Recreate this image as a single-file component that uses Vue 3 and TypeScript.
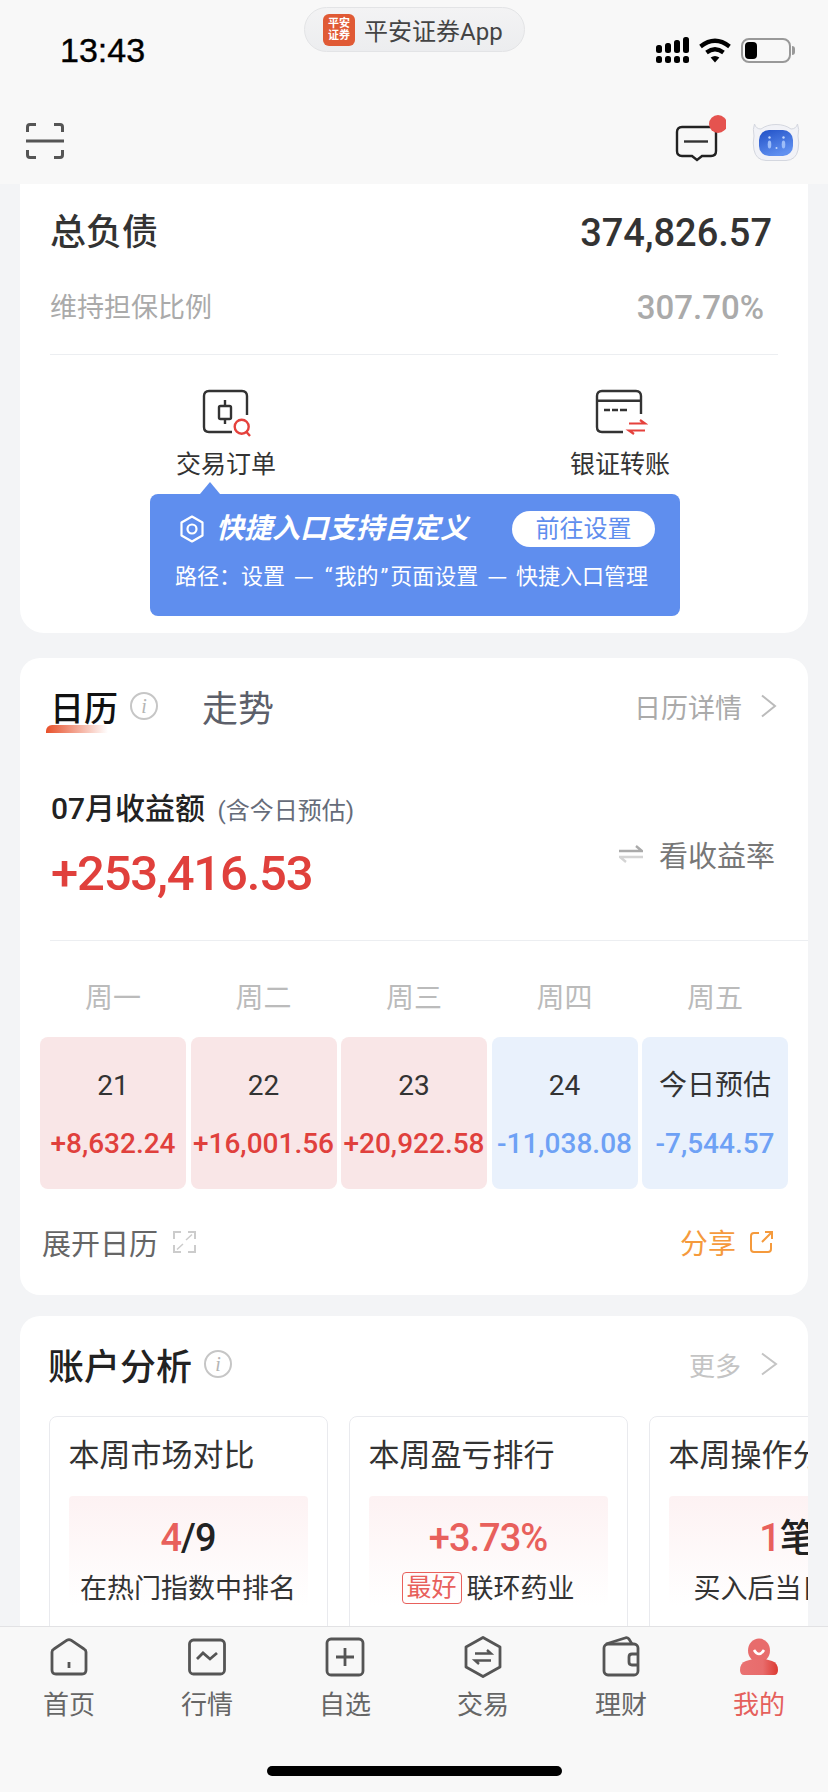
<script setup lang="ts">
interface DayCell {
  week: string
  label: string
  amount: string
  up: boolean
}

interface AnalysisCard {
  title: string
  desc: string
}

const days: DayCell[] = [
  { week: '周一', label: '21', amount: '+8,632.24', up: true },
  { week: '周二', label: '22', amount: '+16,001.56', up: true },
  { week: '周三', label: '23', amount: '+20,922.58', up: true },
  { week: '周四', label: '24', amount: '-11,038.08', up: false },
  { week: '周五', label: '今日预估', amount: '-7,544.57', up: false },
]

const analysis: AnalysisCard[] = [
  { title: '本周市场对比', desc: '在热门指数中排名' },
  { title: '本周盈亏排行', desc: '联环药业' },
  { title: '本周操作分析', desc: '买入后当日卖出' },
]
</script>

<template>
  <div class="screen">
    <header class="top">
      <div class="status">
        <span class="time">13:43</span>
        <div class="pill">
          <span class="pill-logo">平安<br />证券</span>
          <span class="pill-name">平安证券App</span>
        </div>
        <div class="status-icons">
          <svg width="33" height="26" viewBox="0 0 33 26">
            <rect x="0" y="8" width="6" height="8" rx="2.5" />
            <rect x="9" y="6" width="6" height="10" rx="2.5" />
            <rect x="18" y="3" width="6" height="13" rx="2.5" />
            <rect x="27" y="0" width="6" height="16" rx="2.5" />
            <rect x="0" y="19" width="6" height="7" rx="2.5" />
            <rect x="9" y="19" width="6" height="7" rx="2.5" />
            <rect x="18" y="19" width="6" height="7" rx="2.5" />
            <rect x="27" y="19" width="6" height="7" rx="2.5" />
          </svg>
          <svg width="32" height="25" viewBox="0 0 32 25">
            <path d="M1.5 8.5Q16 -3 30.5 8.5" fill="none" stroke="#000" stroke-width="4.2" />
            <path d="M7.5 14.5Q16 8 24.5 14.5" fill="none" stroke="#000" stroke-width="4.2" />
            <path d="M16 24.5L11.6 19.6Q16 16.6 20.4 19.6Z" />
          </svg>
          <div class="battery">
            <span class="battery-level"></span>
          </div>
        </div>
      </div>
      <div class="nav">
        <svg class="scan" width="38" height="36" viewBox="0 0 38 36" fill="none" stroke="#555" stroke-width="3">
          <path d="M1.500 9V4Q1.500 1.500 4 1.500H10M28 1.500H34Q36.500 1.500 36.500 4V9" />
          <path d="M1.500 27V32Q1.500 34.500 4 34.500H10M28 34.500H34Q36.500 34.500 36.500 32V27" />
          <path d="M0 18H38" />
        </svg>
        <div class="nav-right">
          <svg width="56" height="56" viewBox="0 0 56 56" fill="none">
            <path d="M12 13H41Q46 13 46 18V37Q46 42 41 42H32L27 46L22 42H12Q7 42 7 37V18Q7 13 12 13Z" stroke="#222" stroke-width="2.4" />
            <path d="M14 27.500H38" stroke="#333" stroke-width="2.4" />
            <circle cx="48" cy="10" r="9" fill="#e5534f" />
          </svg>
          <svg width="48" height="38" viewBox="0 0 48 38">
            <defs>
              <linearGradient id="faceFill" x1="0" y1="0" x2="0.500" y2="1">
                <stop offset="0" stop-color="#2050c6" />
                <stop offset="1" stop-color="#6090f0" />
              </linearGradient>
            </defs>
            <path d="M2.500 1Q4 6 9 6Q15 1.500 24 1.500Q33 1.500 39 6Q44 6 45.500 1Q47.500 6 46 13Q47.500 20 46 27Q44 37 34 37.500H14Q4 37 2 27Q0.500 20 2 13Q0.500 6 2.500 1Z" fill="#f1f2f7" stroke="#d4d7df" />
            <rect x="7" y="7" width="34" height="26" rx="10" fill="url(#faceFill)" />
            <ellipse cx="17.500" cy="21.500" rx="1.800" ry="4" fill="#9dbdf8" />
            <ellipse cx="31.500" cy="21.500" rx="1.800" ry="4" fill="#9dbdf8" />
            <circle cx="17.500" cy="14.500" r="1.200" fill="#c3d7fb" />
            <circle cx="31.500" cy="14.500" r="1.200" fill="#c3d7fb" />
            <circle cx="24.500" cy="25" r="1" fill="#c3d7fb" />
          </svg>
        </div>
      </div>
    </header>

    <main class="content">
      <section class="card summary">
        <div class="debt-row">
          <span class="debt-label">总负债</span>
          <span class="debt-value">374,826.57</span>
        </div>
        <div class="ratio-row">
          <span>维持担保比例</span>
          <span class="ratio-value">307.70%</span>
        </div>
        <div class="line"></div>
        <div class="quick">
          <div class="quick-item">
            <svg width="56" height="52" viewBox="-2 0 56 52" fill="none" stroke="#333" stroke-width="2.4">
              <path d="M47 27V8Q47 3 42 3H9Q4 3 4 8V39Q4 44 9 44H32" />
              <rect x="19" y="18" width="12" height="13" rx="1.500" />
              <path d="M25 12V18M25 31V36" />
              <circle cx="41.700" cy="38.700" r="7" stroke="#e5413c" />
              <path d="M46.500 44L50 48" stroke="#e5413c" />
            </svg>
            <span>交易订单</span>
          </div>
          <div class="quick-item">
            <svg width="56" height="52" viewBox="0 0 56 52" fill="none" stroke="#333" stroke-width="2.4">
              <path d="M49 26V8Q49 3 44 3H10Q5 3 5 8V39Q5 44 10 44H31" />
              <path d="M5 12.700H49" />
              <path d="M12 22H18M20 22H26M28 22H35" />
              <path d="M37 35.500H53L48 32M53 42.500H37L42 46" stroke="#e5413c" stroke-width="2.200" />
            </svg>
            <span>银证转账</span>
          </div>
        </div>
        <div class="tip">
          <div class="tip-head">
            <svg class="tip-hex" width="24" height="28" viewBox="0 0 24 28" fill="none" stroke="#fff" stroke-width="2.2">
              <path d="M12 1.500L22.500 7.500V20.500L12 26.500L1.500 20.500V7.500Z" stroke-linejoin="round" />
              <circle cx="12" cy="14" r="4.500" />
            </svg>
            <span class="tip-title">快捷入口支持自定义</span>
            <span class="tip-btn">前往设置</span>
          </div>
          <div class="tip-path">路径：设置<span class="dash">—</span><span class="quote">“</span>我的<span class="quote">”</span>页面设置<span class="dash">—</span>快捷入口管理</div>
        </div>
      </section>

      <section class="card calendar">
        <div class="tabs">
          <span class="tab-on">日历</span>
          <span class="info">i</span>
          <span class="tab-off">走势</span>
          <span class="more">日历详情</span>
          <svg width="17" height="24" viewBox="0 0 17 24" fill="none" stroke="#bbb" stroke-width="2">
            <path d="M2 1.500L15 12L2 22.500" />
          </svg>
        </div>
        <div class="month">
          <div>
            <div class="month-label">07月收益额 <small>(含今日预估)</small></div>
            <div class="month-value">+253,416.53</div>
          </div>
          <div class="rate">
            <svg width="24" height="18" viewBox="0 0 24 18" fill="none" stroke-width="2.400">
              <path d="M0 6H23L17 1" stroke="#aaa" />
              <path d="M24 12H1L7 17" stroke="#d4d4d4" />
            </svg>
            <span>看收益率</span>
          </div>
        </div>
        <div class="line line-open"></div>
        <div class="week">
          <span v-for="d in days" :key="d.week">{{ d.week }}</span>
        </div>
        <div class="days">
          <div v-for="d in days" :key="d.label" class="day" :class="d.up ? 'day-up' : 'day-down'">
            <div class="day-label">{{ d.label }}</div>
            <div class="day-amount">{{ d.amount }}</div>
          </div>
        </div>
        <div class="cal-foot">
          <span class="expand">展开日历</span>
          <svg width="23" height="22" viewBox="0 0 23 22" fill="none" stroke="#ccc" stroke-width="2">
            <path d="M8 1H1V8M15 1H22V8M1 14V21H8M22 14V21H15" />
            <path d="M13 9L19 3.500M10 13L4 18.500" stroke-width="1.500" />
          </svg>
          <span class="share">分享</span>
          <svg width="23" height="22" viewBox="0 0 23 22" fill="none" stroke="#f59a3c" stroke-width="2">
            <path d="M9 2H4Q1 2 1 5V18Q1 21 4 21H18Q21 21 21 18V12" />
            <path d="M12 11L21 2M15 1H22V8" />
          </svg>
        </div>
      </section>

      <section class="card account">
        <div class="acc-head">
          <span class="acc-title">账户分析</span>
          <span class="info">i</span>
          <span class="acc-more">更多</span>
          <svg width="18" height="24" viewBox="0 0 18 24" fill="none" stroke="#c4c4c4" stroke-width="2">
            <path d="M2 1.500L16 12L2 22.500" />
          </svg>
        </div>
        <div class="acc-row">
          <div v-for="(a, i) in analysis" :key="a.title" class="acc-card">
            <div class="acc-card-title">{{ a.title }}</div>
            <div class="acc-box">
              <div v-if="i === 0" class="acc-value"><b>4</b>/9</div>
              <div v-else-if="i === 1" class="acc-value"><b>+3.73%</b></div>
              <div v-else class="acc-value"><b>1</b>笔</div>
              <div class="acc-desc">
                <em v-if="i === 1" class="best">最好</em>{{ a.desc }}
              </div>
            </div>
          </div>
        </div>
      </section>
    </main>

    <footer class="tabbar">
      <div class="tab-items">
        <div class="tab-item">
          <svg width="44" height="44" viewBox="0 0 44 44" fill="none" stroke="#555" stroke-width="2.800">
            <path d="M5 17Q5 15 7 14L20 5.200Q22 4 24 5.200L37 14Q39 15 39 17V35Q39 39 35 39H9Q5 39 5 35Z" />
            <path d="M22 27V33" />
          </svg>
          <span>首页</span>
        </div>
        <div class="tab-item">
          <svg width="44" height="44" viewBox="0 0 44 44" fill="none" stroke="#555" stroke-width="2.800">
            <rect x="4.500" y="5" width="35" height="34" rx="4" />
            <path d="M12 24L18 18L25 24L32 18" />
          </svg>
          <span>行情</span>
        </div>
        <div class="tab-item">
          <svg width="44" height="44" viewBox="0 0 44 44" fill="none" stroke="#555" stroke-width="2.800">
            <rect x="4" y="4" width="36" height="36" rx="4" />
            <path d="M22 13V31M13 22H31" />
          </svg>
          <span>自选</span>
        </div>
        <div class="tab-item">
          <svg width="44" height="44" viewBox="0 0 44 44" fill="none" stroke="#555" stroke-width="2.800">
            <path d="M22 2.500L39 12V32L22 41.500L5 32V12Z" stroke-linejoin="round" />
            <path d="M14 18.500H30L26 15M30 25.500H14L18 29" stroke-width="2.400" />
          </svg>
          <span>交易</span>
        </div>
        <div class="tab-item">
          <svg width="44" height="44" viewBox="0 0 44 44" fill="none" stroke="#555" stroke-width="2.800">
            <rect x="5" y="9" width="34" height="31" rx="4" />
            <path d="M7 9L26 3Q28 2 30 4L33 9" />
            <path d="M39 19H33Q30 19 30 22V27Q30 30 33 30H39" />
          </svg>
          <span>理财</span>
        </div>
        <div class="tab-item tab-item-on">
          <svg width="44" height="44" viewBox="0 0 44 44">
            <defs>
              <linearGradient id="meFill" x1="0" y1="0" x2="1" y2="0">
                <stop offset="0" stop-color="#e97272" />
                <stop offset="0.600" stop-color="#e86c6c" />
                <stop offset="1" stop-color="#dc3a32" />
              </linearGradient>
            </defs>
            <ellipse cx="22" cy="15.500" rx="11" ry="12" fill="#e86c6c" />
            <path d="M3 35Q3 28 9 26L16 24H28L35 26Q41 28 41 35Q41 40 37 40H7Q3 40 3 35Z" fill="url(#meFill)" />
            <path d="M17 15Q22 23 27 15" fill="none" stroke="#fff" stroke-width="2.600" />
          </svg>
          <span>我的</span>
        </div>
      </div>
      <div class="home-bar"></div>
    </footer>
  </div>
</template>

<style>
html,
body {
  margin: 0;
  background: #f3f4f6;
}
</style>

<style scoped>
.screen {
  width: 828px;
  height: 1792px;
  display: flex;
  flex-direction: column;
  overflow: hidden;
  background: #f3f4f6;
  font-family: Roboto, "Noto Sans CJK SC", sans-serif;
  color: #333;
}

.top {
  height: 184px;
  flex: none;
  background: #f8f8f8;
}
.status {
  height: 100px;
  display: grid;
  grid-template-columns: 304px 221px 1fr;
}
.time {
  padding-left: 60px;
  line-height: 100px;
  font-family: "Liberation Sans", sans-serif;
  font-size: 34px;
  color: #000;
  -webkit-text-stroke: 0.4px #000;
}
.pill {
  box-sizing: border-box;
  height: 45px;
  margin-top: 7px;
  padding-left: 18px;
  display: flex;
  align-items: center;
  gap: 9px;
  border: 1px solid #e3e4e6;
  border-radius: 23px;
  background: linear-gradient(#f3f3f4, #ecedef);
}
.pill-logo {
  width: 32px;
  height: 32px;
  flex: none;
  border-radius: 6px;
  background: #e05a35;
  color: #fff;
  font-size: 11px;
  font-weight: 700;
  line-height: 12px;
  text-align: center;
  display: flex;
  align-items: center;
  justify-content: center;
}
.pill-name {
  font-size: 24px;
  color: #444;
  white-space: nowrap;
}
.status-icons {
  padding-right: 37px;
  display: flex;
  justify-content: flex-end;
  align-items: center;
  gap: 10px;
}
.battery {
  position: relative;
  box-sizing: border-box;
  width: 50px;
  height: 25px;
  padding: 2px;
  border: 2px solid #999;
  border-radius: 8px;
}
.battery::after {
  content: "";
  position: absolute;
  right: -6px;
  top: 6px;
  width: 3px;
  height: 9px;
  border-radius: 0 3px 3px 0;
  background: #999;
}
.battery-level {
  display: block;
  width: 12px;
  height: 17px;
  border-radius: 4px;
  background: #000;
}
.nav {
  height: 84px;
  padding: 0 28px 0 26px;
  display: flex;
  align-items: center;
  justify-content: space-between;
}
.scan {
  margin-top: -2px;
}
.nav-right {
  display: flex;
  align-items: center;
  gap: 26px;
}

.content {
  flex: 1;
  min-height: 0;
  padding: 0 20px;
  overflow: hidden;
}
.card {
  position: relative;
  background: #fff;
  border-radius: 20px;
}
.line {
  height: 1px;
  background: #eceef1;
}

.summary {
  padding: 27px 30px 153px;
  border-radius: 0 0 24px 24px;
}
.debt-row,
.ratio-row {
  display: flex;
  justify-content: space-between;
}
.debt-row {
  line-height: 44px;
}
.debt-label {
  font-size: 36px;
  font-weight: 500;
}
.debt-value {
  margin-right: 6px;
  font-size: 38px;
  font-weight: 500;
}
.ratio-row {
  margin-top: 35px;
  padding-right: 14px;
  line-height: 36px;
  font-size: 27px;
  color: #aaa;
}
.ratio-value {
  font-size: 33px;
  font-weight: 500;
}
.summary .line {
  margin-top: 28px;
}
.quick {
  margin: 33px 0 0 -21px;
  display: grid;
  grid-template-columns: repeat(2, 394px);
}
.quick-item {
  display: flex;
  flex-direction: column;
  align-items: center;
  gap: 10px;
  font-size: 25px;
  line-height: 30px;
}
.tip {
  position: absolute;
  left: 130px;
  top: 310px;
  width: 530px;
  height: 122px;
  box-sizing: border-box;
  padding: 17px 25px 0;
  border-radius: 8px;
  background: #5f8eee;
  color: #fff;
}
.tip::before {
  content: "";
  position: absolute;
  left: 50px;
  top: -12px;
  border: 10px solid transparent;
  border-top: 0;
  border-bottom: 12px solid #5f8eee;
}
.tip-head {
  display: flex;
  align-items: center;
}
.tip-hex {
  margin: 0 12px 0 5px;
}
.tip-title {
  font-size: 28px;
  font-weight: 700;
  font-style: italic;
  line-height: 36px;
}
.tip-btn {
  margin-left: auto;
  width: 143px;
  height: 36px;
  border-radius: 18px;
  background: #fff;
  color: #5f8eee;
  font-size: 24px;
  line-height: 36px;
  text-align: center;
}
.tip-path {
  margin-top: 12px;
  font-size: 22px;
  line-height: 30px;
  white-space: nowrap;
}
.dash {
  margin: 0 9px;
  font-family: "Noto Sans CJK SC", sans-serif;
}
.quote {
  margin: 0 2px;
}

.calendar {
  margin-top: 25px;
  padding-top: 28px;
  box-sizing: border-box;
  height: 637px;
}
.tabs {
  position: relative;
  height: 40px;
  padding: 0 31px 0 30px;
  display: flex;
  align-items: center;
}
.tabs::after {
  content: "";
  position: absolute;
  left: 26px;
  top: 39px;
  width: 62px;
  height: 8px;
  border-radius: 6px 0 0 0;
  background: linear-gradient(90deg, #e8502a, rgba(232, 80, 42, 0));
}
.tab-on {
  font-size: 34px;
  font-weight: 500;
  color: #111;
}
.info {
  box-sizing: border-box;
  width: 28px;
  height: 28px;
  margin-left: 12px;
  border: 2px solid #c6c6c6;
  border-radius: 50%;
  color: #b5b5b5;
  font-family: "Liberation Serif", serif;
  font-size: 20px;
  font-style: italic;
  line-height: 24px;
  text-align: center;
}
.tab-off {
  margin-left: 44px;
  font-size: 36px;
  color: #5c5f6a;
}
.more {
  margin: 0 18px 0 auto;
  font-size: 27px;
  color: #aaa;
}
.month {
  margin-top: 63px;
  padding: 0 33px 0 31px;
  display: flex;
  justify-content: space-between;
  align-items: center;
}
.month-label {
  font-size: 30px;
  font-weight: 500;
  line-height: 40px;
  color: #222;
}
.month-label small {
  margin-left: 5px;
  font-size: 24px;
  font-weight: 400;
  color: #666c7a;
}
.month-value {
  margin-top: 13px;
  font-size: 49px;
  font-weight: 500;
  line-height: 60px;
  letter-spacing: -1.200px;
  color: #e0403c;
}
.rate {
  margin-top: 14px;
  display: flex;
  align-items: center;
  gap: 16px;
  font-size: 29px;
  color: #777;
}
.line-open {
  margin: 36px 0 0 30px;
}
.week,
.days {
  padding-left: 20px;
  width: 748px;
  display: grid;
  grid-template-columns: repeat(5, 1fr);
  column-gap: 4.500px;
  text-align: center;
}
.week {
  margin-top: 38px;
  font-size: 28px;
  line-height: 40px;
  color: #bbb;
}
.days {
  margin-top: 18px;
}
.day {
  height: 152px;
  padding-top: 29px;
  box-sizing: border-box;
  border-radius: 8px;
}
.day-up {
  background: #f9e6e7;
  color: #e0403c;
}
.day-down {
  background: #e9f1fc;
  color: #6ea1f5;
}
.day-label {
  font-size: 28px;
  line-height: 40px;
  color: #333;
}
.day-amount {
  margin-top: 18px;
  font-size: 28px;
  font-weight: 500;
  line-height: 40px;
  white-space: nowrap;
}
.cal-foot {
  margin-top: 34px;
  height: 38px;
  padding: 0 35px 0 22px;
  display: flex;
  align-items: center;
}
.expand {
  margin-right: 15px;
  font-size: 29px;
  color: #666;
}
.share {
  margin: 0 14px 0 auto;
  font-size: 28px;
  color: #f59a3c;
}

.account {
  margin-top: 21px;
  height: 400px;
  padding-top: 26px;
  overflow: hidden;
}
.acc-head {
  height: 44px;
  padding: 0 30px 0 28px;
  display: flex;
  align-items: center;
}
.acc-title {
  font-size: 36px;
  font-weight: 500;
  color: #222;
}
.acc-more {
  margin: 0 19px 0 auto;
  font-size: 26px;
  color: #c4c4c4;
}
.acc-row {
  margin-top: 30px;
  padding-left: 28.500px;
  display: flex;
  gap: 21px;
}
.acc-card {
  box-sizing: border-box;
  width: 279px;
  height: 240px;
  flex: none;
  padding: 21px 19px 0;
  border: 1px solid #e9eaee;
  border-radius: 8px;
}
.acc-card-title {
  font-size: 31px;
  line-height: 36px;
  white-space: nowrap;
}
.acc-box {
  margin-top: 22px;
  height: 110px;
  padding-top: 19px;
  box-sizing: border-box;
  border-radius: 4px;
  background: linear-gradient(#fdf2f3, #fff);
  text-align: center;
  white-space: nowrap;
}
.acc-value {
  font-size: 38px;
  font-weight: 500;
  line-height: 46px;
  letter-spacing: -1px;
  color: #222;
}
.acc-value b {
  font-weight: 500;
  color: #e8605c;
}
.acc-desc {
  margin-top: 11px;
  font-size: 27px;
  line-height: 34px;
}
.best {
  display: inline-block;
  box-sizing: border-box;
  width: 60px;
  height: 32px;
  margin-right: 5px;
  border: 1px solid #e8605c;
  border-radius: 4px;
  color: #e8605c;
  font-size: 25px;
  font-style: normal;
  line-height: 29px;
  vertical-align: top;
}

.tabbar {
  height: 166px;
  flex: none;
  box-sizing: border-box;
  padding-top: 8px;
  border-top: 1px solid #e2e2e4;
  background: #f8f8f8;
}
.tab-items {
  display: grid;
  grid-template-columns: repeat(6, 1fr);
}
.tab-item {
  display: flex;
  flex-direction: column;
  align-items: center;
  gap: 11px;
  font-size: 26px;
  line-height: 30px;
  color: #666;
}
.tab-item-on {
  color: #e5605c;
}
.home-bar {
  width: 295px;
  height: 10px;
  margin: 46px auto 0;
  border-radius: 5px;
  background: #000;
}
</style>
